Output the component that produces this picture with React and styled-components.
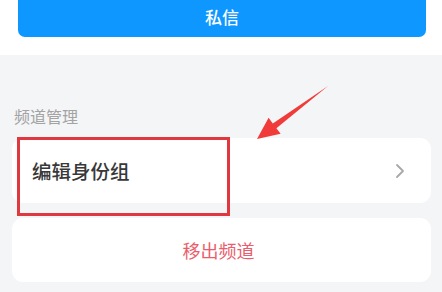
import React from 'react'
import styled, { createGlobalStyle } from 'styled-components'

const Global = createGlobalStyle`
  body {
    margin: 0;
    background: #f4f5f7;
    font-family: "Noto Sans CJK SC", "Noto Sans", sans-serif;
  }
`

const Page = styled.div`
  position: relative;
  width: 442px;
  height: 292px;
  overflow: hidden;
  background: #f4f5f7;
`

const TopBar = styled.div`
  display: flex;
  flex-direction: column;
  background: #ffffff;
  height: 55px;
  padding: 0 16px 0 18px;
`

const PrimaryButton = styled.div`
  margin-top: -13px;
  height: 50px;
  border-radius: 7px;
  background: #0e98ff;
  color: #ffffff;
  font-size: 17px;
  font-weight: 500;
  display: flex;
  align-items: center;
  justify-content: center;
  padding-top: 8px;
  box-sizing: border-box;
`

const Section = styled.div`
  padding: 50px 11px 0 12px;
  display: flex;
  flex-direction: column;
`

const Label = styled.div`
  font-size: 16px;
  line-height: 22px;
  color: #a3a3a3;
  padding-left: 2px;
  margin-bottom: 11px;
`

const Card = styled.div`
  background: #ffffff;
  border-radius: 11px;
  height: ${p => p.h}px;
  margin-bottom: ${p => p.gap || 0}px;
  display: flex;
  align-items: center;
  justify-content: ${p => (p.center ? 'center' : 'space-between')};
  padding: 0 26px 0 20px;
  box-sizing: border-box;
`

const RowText = styled.span`
  font-size: 19.5px;
  font-weight: 500;
  color: #383838;
`

const DangerText = styled.span`
  font-size: 18px;
  color: #e95d6c;
`

const Highlight = styled.div`
  position: absolute;
  left: 17px;
  top: 137px;
  width: 213px;
  height: 79px;
  border: 3px solid #e0383e;
  box-sizing: border-box;
`

const Overlay = styled.svg`
  position: absolute;
  left: 0;
  top: 0;
  pointer-events: none;
`

function Chevron() {
  return (
    <svg width="10" height="16" viewBox="0 0 10 16">
      <path d="M2 2 L8 8 L2 14" fill="none" stroke="#a8a8a8" strokeWidth="1.8" strokeLinecap="round" strokeLinejoin="round" />
    </svg>
  )
}

export default function App() {
  return (
    <Page>
      <Global />
      <TopBar>
        <PrimaryButton>私信</PrimaryButton>
      </TopBar>
      <Section>
        <Label>频道管理</Label>
        <Card h={65} gap={15}>
          <RowText>编辑身份组</RowText>
          <Chevron />
        </Card>
        <Card h={64} center>
          <DangerText>移出频道</DangerText>
        </Card>
      </Section>

      <Highlight />
      <Overlay width="442" height="292" viewBox="0 0 442 292">
        <polygon
          points="257,139 268.6,117.8 272.8,123.4 328,86 276.4,128.2 280.6,133.8"
          fill="#f13b3b"
        />
      </Overlay>
    </Page>
  )
}
